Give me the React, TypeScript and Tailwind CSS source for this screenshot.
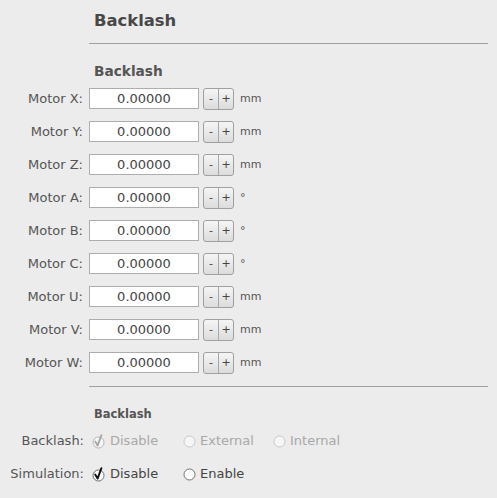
import React from "react";

const motors: [string, string][] = [
  ["X", "mm"],
  ["Y", "mm"],
  ["Z", "mm"],
  ["A", "°"],
  ["B", "°"],
  ["C", "°"],
  ["U", "mm"],
  ["V", "mm"],
  ["W", "mm"],
];

function CheckCircle({ disabled }: { disabled?: boolean }) {
  const stroke = disabled ? "#b4b4b4" : "#6a6a6a";
  const check = disabled ? "#a8a8a8" : "#111111";
  return (
    <svg width="14" height="16" viewBox="0 0 14 16" className="shrink-0">
      <circle cx="6.5" cy="9.5" r="5.5" fill={disabled ? "#f6f6f6" : "#ffffff"} stroke={stroke} strokeWidth="1" />
      <path d="M3.2 8.6 L5.6 12.6 L9.4 2.2" fill="none" stroke={check} strokeWidth="1.9" strokeLinecap="round" strokeLinejoin="round" />
    </svg>
  );
}

function Radio({ disabled }: { disabled?: boolean }) {
  return (
    <svg width="13" height="13" viewBox="0 0 13 13" className="shrink-0">
      <circle cx="6.5" cy="6.5" r="5.5" fill={disabled ? "#f6f6f6" : "#ffffff"} stroke={disabled ? "#c8c8c8" : "#6e6e6e"} strokeWidth="1" />
    </svg>
  );
}

export default function App() {
  return (
    <div
      className="w-[497px] h-[498px] overflow-hidden bg-[#ececec] text-[#555]"
      style={{ fontFamily: '"DejaVu Sans", Verdana, sans-serif' }}
    >
      <div className="pl-[94px] pt-[10px] h-[43px] text-[16.4px] font-bold text-[#484848] leading-[22px]">Backlash</div>
      <div className="ml-[89px] w-[399px] border-t border-[#a0a0a0]"></div>
      <div className="pl-[94px] pt-[18px] h-[44px] text-[13.7px] font-bold text-[#555] leading-[18px]">Backlash</div>
      <div className="flex flex-col gap-[12px]">
        {motors.map(([m, unit]) => (
          <div key={m} className="flex items-center h-[21px]">
            <div className="w-[84px] text-right text-[13px] leading-[21px] pr-[1px]">Motor {m}:</div>
            <div className="ml-[5px] w-[110px] h-[21px] bg-white border border-[#adadad] text-center text-[13px] leading-[19px] text-[#444]">
              0.00000
            </div>
            <div className="ml-[4px] flex h-[22px] w-[31px] rounded-[3px] border border-[#a0a0a0] bg-gradient-to-b from-[#f5f5f5] to-[#dcdcdc] text-[11px] text-[#444] leading-[20px]">
              <div className="flex-1 text-center border-r border-[#a8a8a8]">-</div>
              <div className="flex-1 text-center">+</div>
            </div>
            <div className="ml-[6px] pt-[2px] text-[11px] text-[#555]">{unit}</div>
          </div>
        ))}
      </div>
      <div className="mt-[13px] ml-[89px] w-[399px] border-t border-[#a0a0a0]"></div>
      <div className="pl-[94px] pt-[19px] h-[44px] text-[11.5px] font-bold text-[#555] leading-[16px]">Backlash</div>
      <div className="flex items-center h-[20px] text-[13px]">
        <div className="w-[84px] text-right">Backlash:</div>
        <div className="ml-[8px] w-[91px] flex items-center gap-[4px] text-[#a8a8a8]">
          <CheckCircle disabled />
          <span>Disable</span>
        </div>
        <div className="w-[90px] flex items-center gap-[4px] text-[#a8a8a8]">
          <Radio disabled />
          <span>External</span>
        </div>
        <div className="flex items-center gap-[4px] text-[#a8a8a8]">
          <Radio disabled />
          <span>Internal</span>
        </div>
      </div>
      <div className="mt-[13px] flex items-center h-[20px] text-[13px]">
        <div className="w-[84px] text-right">Simulation:</div>
        <div className="ml-[8px] w-[91px] flex items-center gap-[4px] text-[#444]">
          <CheckCircle />
          <span>Disable</span>
        </div>
        <div className="flex items-center gap-[4px] text-[#444]">
          <Radio />
          <span>Enable</span>
        </div>
      </div>
    </div>
  );
}
